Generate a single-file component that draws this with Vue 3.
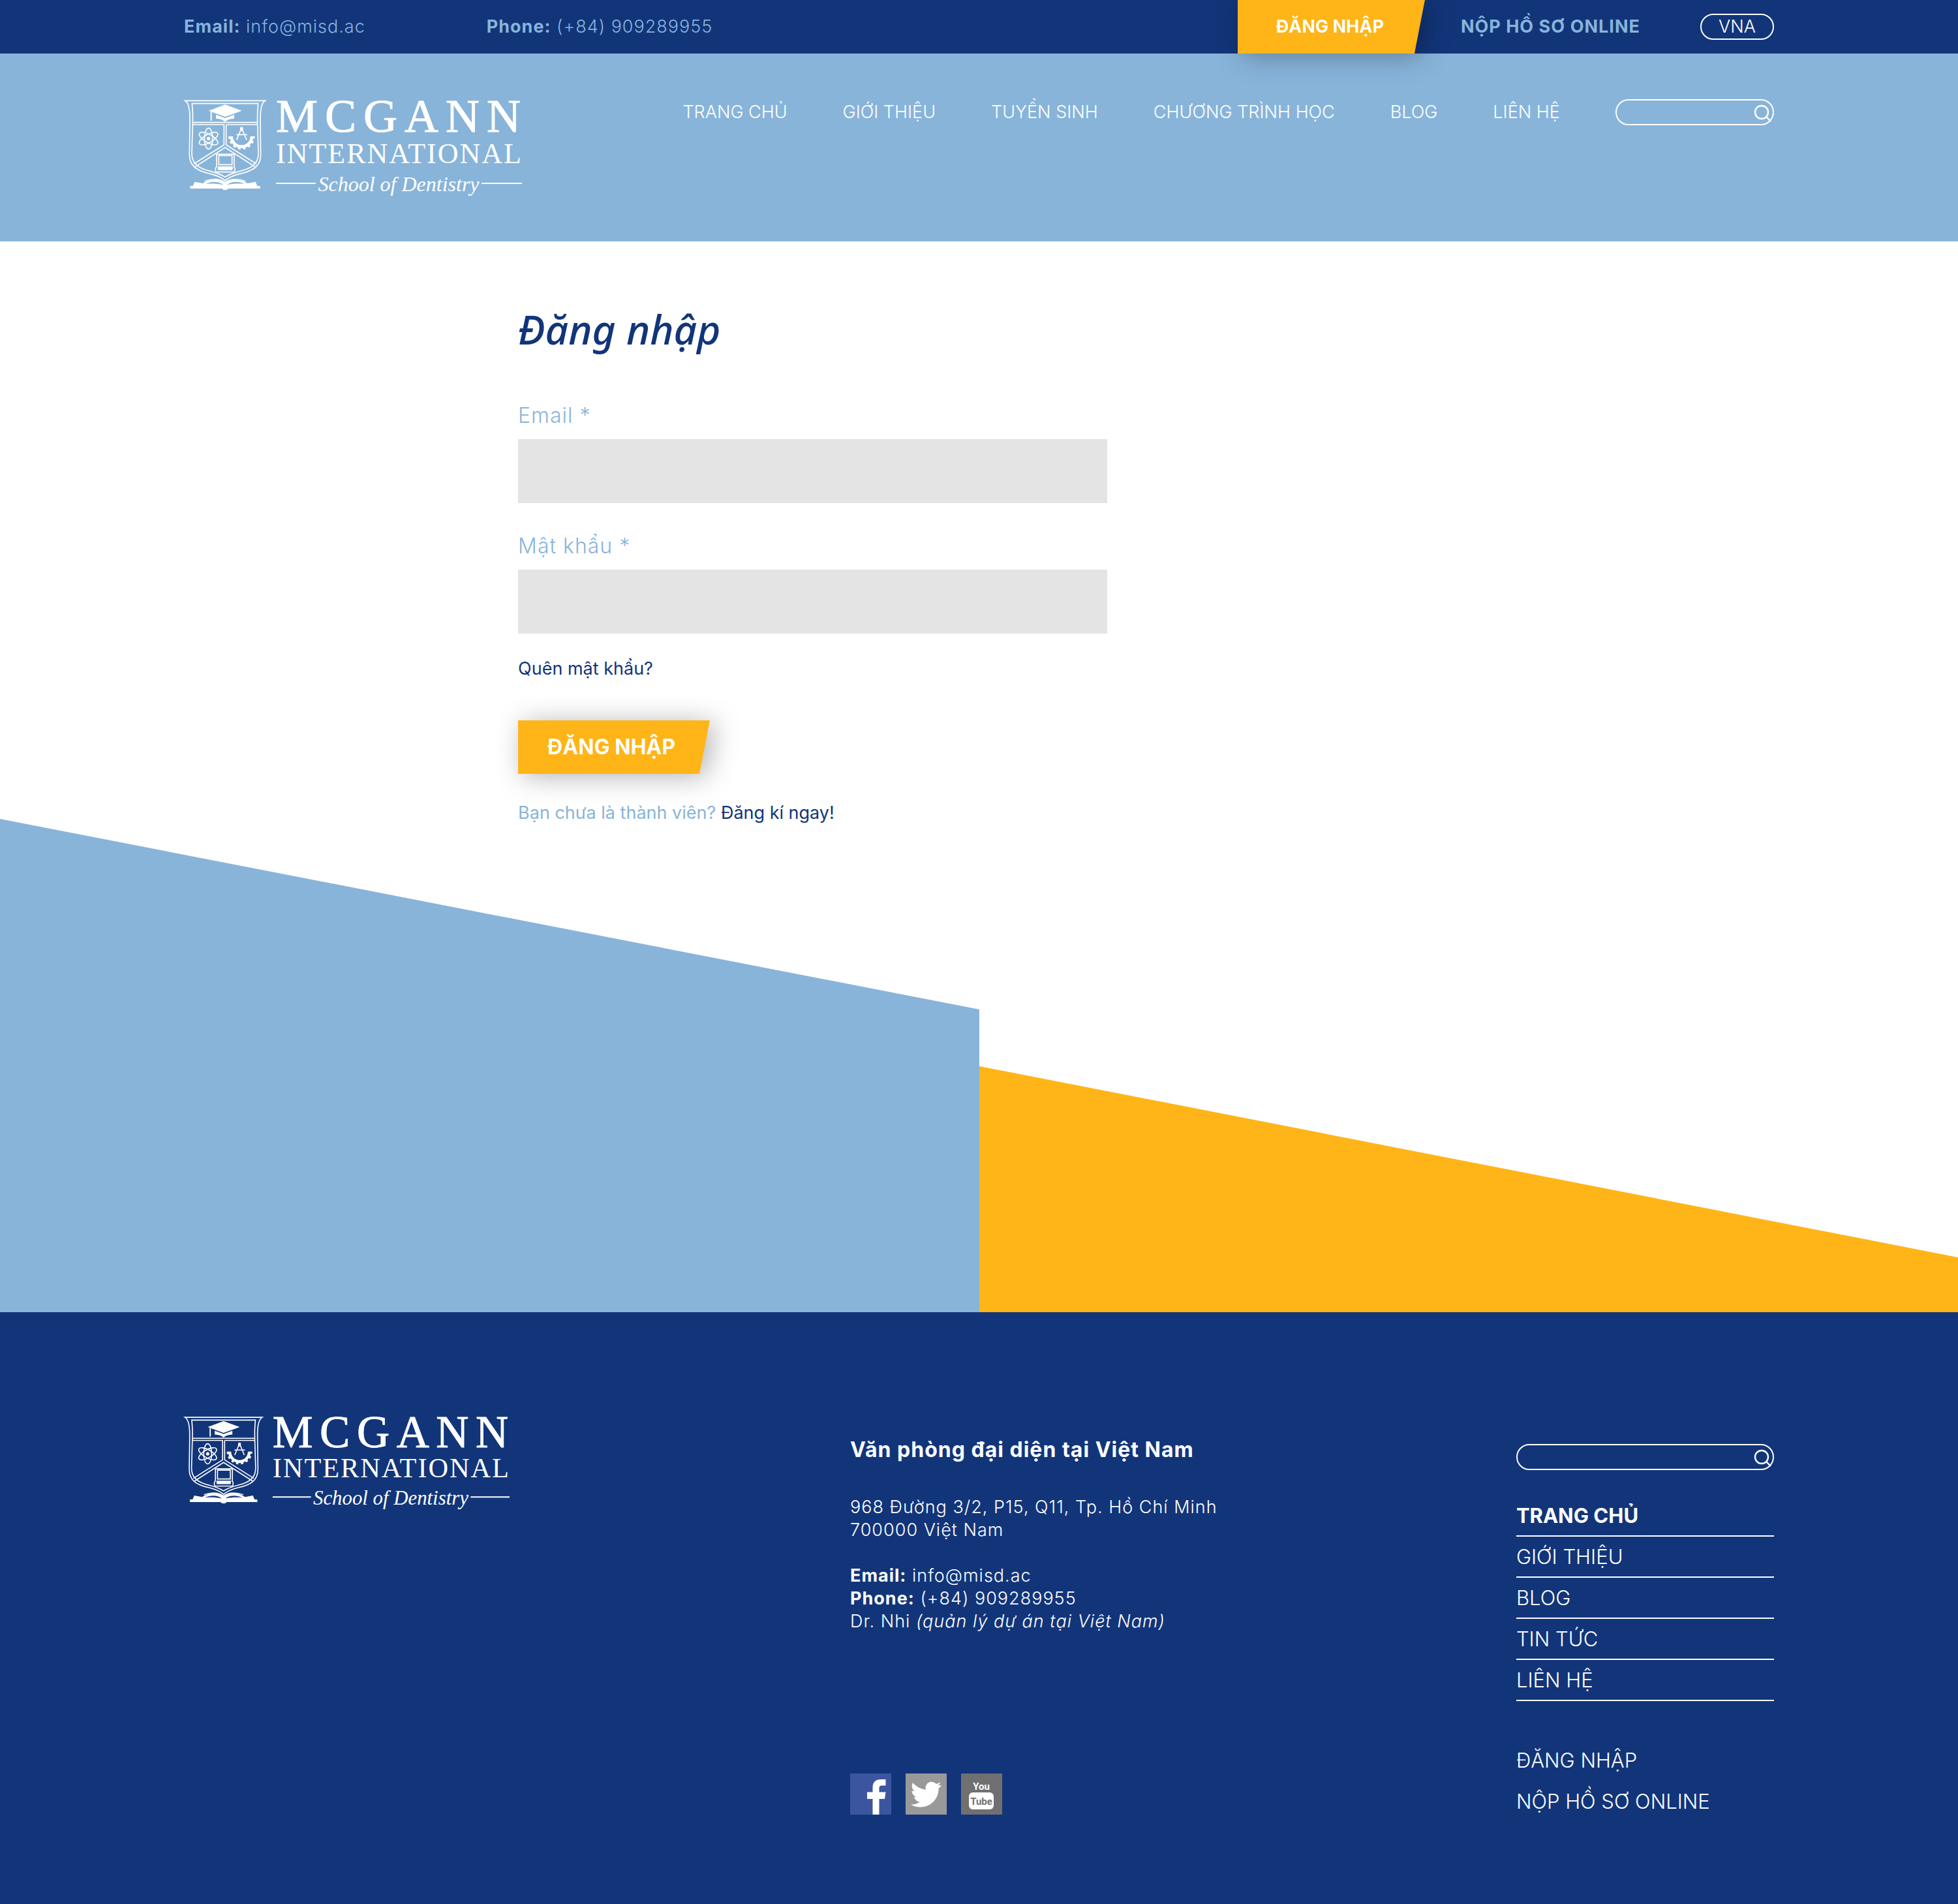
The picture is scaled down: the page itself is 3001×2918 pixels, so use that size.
<script setup>
import { ref, h } from 'vue'

const mainMenu = ['TRANG CHỦ', 'GIỚI THIỆU', 'TUYỂN SINH', 'CHƯƠNG TRÌNH HỌC', 'BLOG', 'LIÊN HỆ']
const footerMenu = ['TRANG CHỦ', 'GIỚI THIỆU', 'BLOG', 'TIN TỨC', 'LIÊN HỆ']
const accountMenu = ['ĐĂNG NHẬP', 'NỘP HỒ SƠ ONLINE']

const email = ref('')
const password = ref('')

const line = (d, width = 5) => h('path', { d, fill: 'none', stroke: 'currentColor', 'stroke-width': width })
const solid = (d) => h('path', { d, fill: 'currentColor', 'fill-rule': 'evenodd' })
const orbit = (angle) => h('ellipse', {
  cx: 146, cy: 217, rx: 48, ry: 19, fill: 'none', stroke: 'currentColor', 'stroke-width': 5,
  transform: `rotate(${angle} 146 217)`,
})
const serif = '"Liberation Serif", serif'

// School crest and wordmark, shared by the header and the footer.
const SchoolLogo = () => h('svg', { viewBox: '0 0 519 154', overflow: 'visible', role: 'img', 'aria-label': 'McGann International School of Dentistry' }, [
  h('g', { transform: 'translate(-11 -10) scale(.3333)' }, [
    // shield
    line('M38 43H406C385 56 383 100 384 150L386 290C386 345 350 366 290 379C262 386 240 395 222 410C204 395 182 386 154 379C94 366 58 345 58 290L60 150C61 100 59 56 38 43Z', 5),
    line('M70 56H374C370 90 370 120 371 150L375 285C375 332 345 354 290 367C262 374 240 382 222 394C204 382 182 374 154 367C99 354 69 332 69 285L73 150C74 120 74 90 70 56Z'),
    line('M74 143H370M74 153H217V246L78 334M227 153H370M227 153V246L366 334'),
    line('M84 347L222 258L360 347'),
    // graduation cap
    solid('M146 89L222 61L299 89L222 117Z'),
    solid('M180 107L222 123L264 107V125C246 126 234 129 222 140C210 129 198 126 180 125Z'),
    line('M158 94V135', 6),
    // atom
    orbit(90), orbit(30), orbit(-30),
    h('circle', { cx: 146, cy: 217, r: 8, fill: 'currentColor' }),
    // compass and gear
    line('M298 168L275 223M298 168L321 223M274 199H324'),
    solid('M291 172A7 9 0 0 1 305 172L302 182H294Z'),
    line('M251 207A47 47 0 0 0 345 207', 14),
    h('path', { d: 'M243 207A55 55 0 0 0 353 207', fill: 'none', stroke: 'currentColor', 'stroke-width': 12, 'stroke-dasharray': '11 12.2' }),
    // computer
    line('M183 345V289H264V345'),
    line('M193 295H254V337H193Z'),
    line('M184 345C176 350 175 372 184 371H261C270 372 269 350 261 345'),
    solid('M188 345H257V356Q257 362 251 362H194Q188 362 188 356Z'),
    // open book
    solid('M61 435H74L82 416L120 423C150 400 205 400 222 420C239 400 294 400 324 423L362 416L370 435H383V447H236C232 456 212 456 208 447H61ZM133 426C160 412 195 414 214 430C185 424 160 424 133 426ZM311 426C284 412 249 414 230 430C259 424 284 424 311 426Z'),
    line('M128 412C165 400 200 402 222 418C244 402 279 400 316 412', 4),
  ]),
  h('text', { x: 141, y: 52, fill: 'currentColor', stroke: 'currentColor', 'font-family': serif, 'font-size': 72, 'letter-spacing': 11 }, 'MCGANN'),
  h('text', { x: 141, y: 100, fill: 'currentColor', 'font-family': serif, 'font-size': 44, 'letter-spacing': 2 }, 'INTERNATIONAL'),
  h('text', { x: 329, y: 143, fill: 'currentColor', 'font-family': serif, 'font-style': 'italic', 'font-size': 32, 'text-anchor': 'middle' }, 'School of Dentistry'),
  line('M141 131H202M456 131H518', 2),
])
</script>

<template>
  <div class="page">
    <header>
      <div class="topbar">
        <p class="contact"><b>Email:</b> <a href="mailto:info@misd.ac">info@misd.ac</a></p>
        <p class="contact"><b>Phone:</b> <a href="tel:+84909289955">(+84) 909289955</a></p>
        <div class="topbar-actions">
          <div class="slant-shadow"><a class="slant tab" href="#">ĐĂNG NHẬP</a></div>
          <a class="apply" href="#">NỘP HỒ SƠ ONLINE</a>
          <button class="language" type="button">VNA</button>
        </div>
      </div>
      <div class="masthead">
        <a class="brand" href="#"><SchoolLogo /></a>
        <nav class="menu" aria-label="Menu chính">
          <a v-for="item in mainMenu" :key="item" href="#">{{ item }}</a>
          <form class="search" role="search" @submit.prevent>
            <input type="search" aria-label="Tìm kiếm" />
            <button type="submit" aria-label="Tìm">
              <svg viewBox="0 0 28 28"><circle cx="12" cy="12" r="10" /><path d="M19 19L26 26" /></svg>
            </button>
          </form>
        </nav>
      </div>
    </header>

    <main>
      <form class="login" @submit.prevent>
        <h1>Đăng nhập</h1>
        <div class="field">
          <label for="email">Email *</label>
          <input id="email" v-model="email" type="email" />
        </div>
        <div class="field">
          <label for="password">Mật khẩu *</label>
          <input id="password" v-model="password" type="password" />
        </div>
        <a class="forgot" href="#">Quên mật khẩu?</a>
        <div class="slant-shadow"><button class="slant submit" type="submit">ĐĂNG NHẬP</button></div>
        <p class="join">Bạn chưa là thành viên? <a href="#">Đăng kí ngay!</a></p>
      </form>
      <svg class="slopes" viewBox="0 0 3001 756" aria-hidden="true">
        <path d="M0 0L1501 292V756H0Z" fill="#88b4da" />
        <path d="M1501 379L3001 672V756H1501Z" fill="#ffb517" />
      </svg>
    </main>

    <footer>
      <a class="brand-small" href="#"><SchoolLogo /></a>
      <div class="office">
        <h2>Văn phòng đại diện tại Việt Nam</h2>
        <address>
          <p>968 Đường 3/2, P15, Q11, Tp. Hồ Chí Minh<br />700000 Việt Nam</p>
          <p>
            <b>Email:</b> <a href="mailto:info@misd.ac">info@misd.ac</a><br />
            <b>Phone:</b> <a href="tel:+84909289955">(+84) 909289955</a><br />
            Dr. Nhi <i>(quản lý dự án tại Việt Nam)</i>
          </p>
        </address>
        <div class="social">
          <a href="#" aria-label="Facebook">
            <svg viewBox="0 0 63 63"><rect width="63" height="63" fill="#3b559f" /><path d="M34.500 63V39H26V28.500H34.500V22C34.500 13 39 9 47 9H54.500V18.500H49C45.500 18.500 44.500 20 44.500 23V28.500H54.500L53 39H44.500V63Z" fill="#fff" /></svg>
          </a>
          <a href="#" aria-label="Twitter">
            <svg viewBox="0 0 63 63"><rect width="63" height="63" fill="#999" /><path d="M11 14C16 20 23 24 31 24.500C29 16 37 11 43 13.500C45 14 46.500 15.500 47 16C49.500 15.500 51 14.500 53 13.500C52.500 15.500 51.500 17 50 18.500L55 18C54 20 52 21.500 50.500 23C51 40 37 52 22 51.500C17 51.500 12 50 8 47.500C13.500 48 18 46 22 43.500C17.500 43 14 40 13 36H17C13 35 9.500 31 9.500 26.500L14 27.500C10 24.500 8.500 19 11 14Z" fill="#fff" /></svg>
          </a>
          <a href="#" aria-label="YouTube">
            <svg viewBox="0 0 63 63">
              <rect width="63" height="63" fill="#707070" />
              <rect x="12" y="29" width="38" height="26" rx="6" fill="#fff" />
              <text class="tube" x="31" y="25" fill="#fff">You</text>
              <text class="tube" x="31" y="48" fill="#707070">Tube</text>
            </svg>
          </a>
        </div>
      </div>
      <div class="links">
        <form class="search" role="search" @submit.prevent>
          <input type="search" aria-label="Tìm kiếm" />
          <button type="submit" aria-label="Tìm">
            <svg viewBox="0 0 28 28"><circle cx="12" cy="12" r="10" /><path d="M19 19L26 26" /></svg>
          </button>
        </form>
        <ul class="ruled">
          <li v-for="(item, i) in footerMenu" :key="item" :class="{ current: i === 0 }"><a href="#">{{ item }}</a></li>
        </ul>
        <ul>
          <li v-for="item in accountMenu" :key="item"><a href="#">{{ item }}</a></li>
        </ul>
      </div>
    </footer>
  </div>
</template>

<style>
body { margin: 0; background: #fff; }
</style>

<style scoped>
.page {
  --navy: #12357a;
  --sky: #88b4da;
  --gold: #ffb517;
  font-family: Inter, Roboto, sans-serif;
  font-size: 27px;
  font-weight: 300;
  line-height: 36px;
  color: #fff;
}
.page * { box-sizing: border-box; }
a { color: inherit; text-decoration: none; }
p, h1, h2, ul { margin: 0; padding: 0; }
ul { list-style: none; }
b { font-weight: 700; }
button, input { font: inherit; color: inherit; margin: 0; padding: 0; border: 0; outline: 0; background: none; }
svg { display: block; }

.topbar {
  display: flex;
  align-items: center;
  gap: 186px;
  height: 82px;
  padding: 0 9.4%;
  background: var(--navy);
  color: var(--sky);
}
.contact { letter-spacing: 1px; white-space: nowrap; }
.topbar-actions { display: flex; align-items: center; margin-left: auto; }
.slant-shadow { width: max-content; filter: drop-shadow(8px 4px 20px rgba(0, 0, 0, .3)); }
.slant {
  display: flex;
  align-items: center;
  height: 82px;
  background: var(--gold);
  color: #fff;
  font-weight: 700;
  clip-path: polygon(0 0, 100% 0, calc(100% - 16px) 100%, 0 100%);
}
.tab { padding: 0 63px 0 59px; }
.apply { margin: 0 92px 0 55px; font-weight: 700; letter-spacing: 1px; }
.language { width: 113px; height: 40px; border: 2px solid #fff; border-radius: 20px; color: #fff; }

.masthead {
  display: flex;
  justify-content: space-between;
  align-items: flex-start;
  height: 288px;
  padding: 68px 9.4% 0;
  background: var(--sky);
}
.brand svg { width: 519px; }
.menu { display: flex; align-items: center; gap: 85px; height: 44px; line-height: 38px; white-space: nowrap; }

.search { position: relative; width: 243px; height: 40px; }
.search input { display: block; width: 100%; height: 100%; padding: 0 48px 0 20px; border: 2px solid #fff; border-radius: 20px; appearance: none; }
.search button { position: absolute; top: 8px; right: 3px; width: 28px; height: 28px; }
.search svg { fill: none; stroke: #fff; stroke-width: 2.4; }

.login { padding: 94px 0 0 26.46%; color: var(--sky); }
h1 { margin-bottom: 73px; font: italic 500 62px/80px "Noto Sans", "Open Sans", sans-serif; color: var(--navy); }
.field { display: flex; flex-direction: column; gap: 16px; max-width: 903px; margin-bottom: 46px; }
.field label { font-size: 32px; line-height: 40px; letter-spacing: 1px; }
.field input { height: 98px; padding: 0 24px; background: #e4e4e4; color: var(--navy); }
.forgot { display: block; width: max-content; margin: -10px 0 61px; font-weight: 400; color: var(--navy); }
.submit { padding: 0 53px 0 45px; font-size: 32px; }
.join { margin-top: 42px; font-weight: 400; }
.join a { color: var(--navy); }
.slopes { width: 100%; margin-top: -9px; }

footer {
  display: grid;
  grid-template-columns: 1fr 1fr 395px;
  align-items: start;
  padding: 157px 9.4% 125px;
  background: var(--navy);
}
.brand-small svg { width: 500px; }
.office { padding-top: 34px; }
h2 { margin-bottom: 50px; font-size: 32px; line-height: 40px; font-weight: 700; letter-spacing: 1px; }
address { font-style: normal; line-height: 35px; letter-spacing: 1px; }
address p + p { margin-top: 35px; }
.social { display: flex; gap: 22px; margin-top: 216px; }
.social svg { width: 63px; height: 63px; }
.tube { font: 700 15px Roboto, "Liberation Sans", sans-serif; text-anchor: middle; }
.links { padding-top: 45px; font-size: 31px; }
.links .search { width: 100%; margin-bottom: 39px; }
.links li { height: 63px; line-height: 61px; }
.ruled { margin-bottom: 60px; }
.ruled li { border-bottom: 2px solid #fff; }
.current { font-weight: 700; }
</style>
